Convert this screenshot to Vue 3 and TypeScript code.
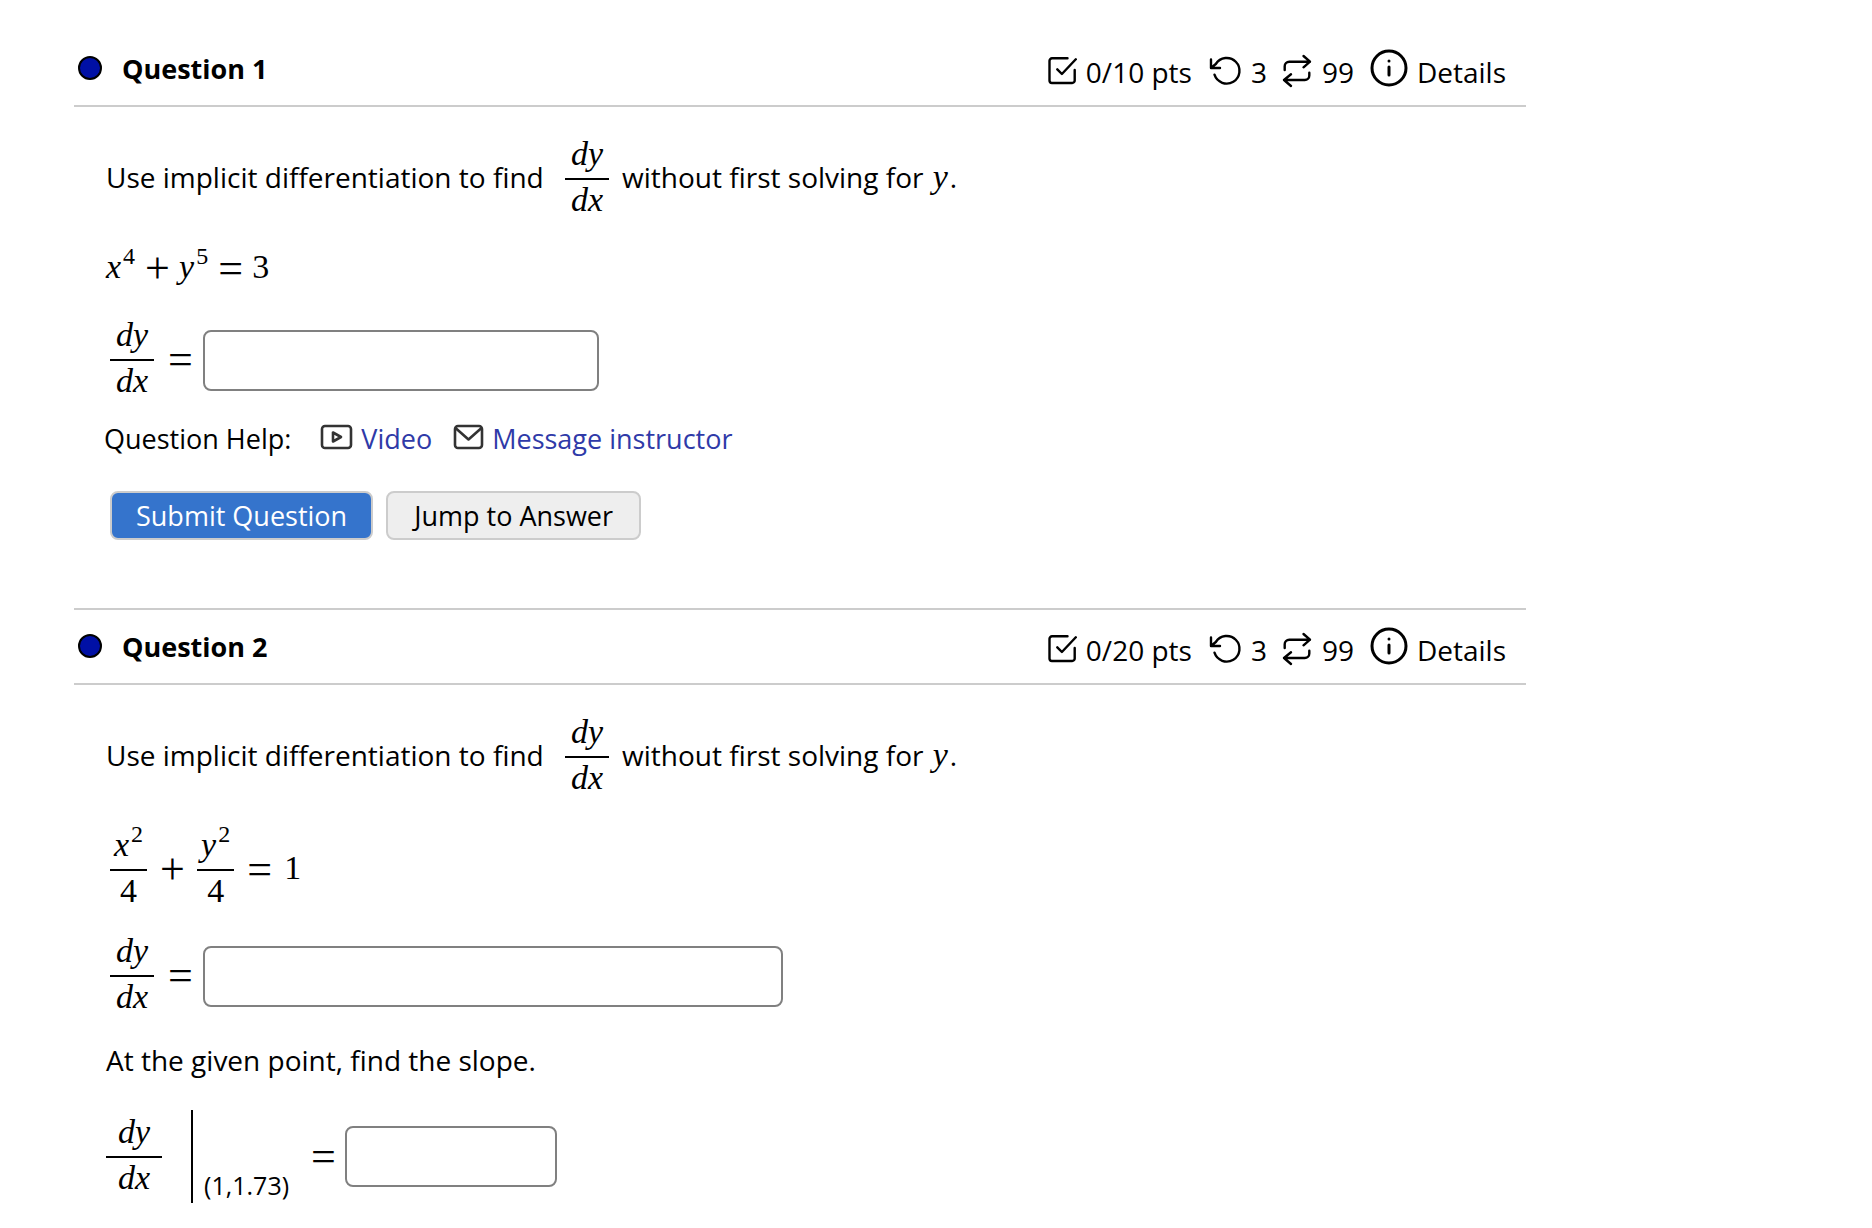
<script setup lang="ts">
import { defineComponent, h } from 'vue'

interface Question {
  id: number
  points: number
}

const questions: Question[] = [
  { id: 1, points: 10 },
  { id: 2, points: 20 },
]

const attempts = 3
const versions = 99

// Derivative written as a stacked fraction, dy over dx
const DyDx = defineComponent({
  setup: () => () =>
    h('span', { class: 'frac' }, [h('i', { class: 'num' }, 'dy'), h('i', { class: 'den' }, 'dx')]),
})
</script>

<template>
  <main class="assessment">
    <section v-for="q in questions" :key="q.id" class="question">
      <header class="head">
        <span class="status"></span>
        <h2>Question {{ q.id }}</h2>
        <div class="stats">
          <span class="stat score">
            <svg class="icon" width="30" height="34" viewBox="0 0 30 34">
              <path d="M20.5 4.3H5a2.5 2.5 0 0 0-2.5 2.5V26.5a2.5 2.5 0 0 0 2.5 2.5H25.2a2.5 2.5 0 0 0 2.5-2.5V16M10.3 15.3l4.6 4.7L28.8 5.3" />
            </svg>
            0/{{ q.points }} pts
          </span>
          <span class="stat">
            <svg class="icon" width="34" height="34" viewBox="0 0 34 34">
              <path d="M3 5.5V14H12M3 14L7.8 10A12.8 12.8 0 1 1 6.5 20.7" />
            </svg>
            {{ attempts }}
          </span>
          <span class="stat">
            <svg class="icon" width="32" height="34" viewBox="0 0 32 34">
              <path d="M3.7 16V12.2a4.5 4.5 0 0 1 4.5-4.5H29M22.5 2L29 7.7L22.5 13.3M28.3 18.7V21.5a4.5 4.5 0 0 1-4.5 4.5H3M10 20.3L3 26L10 32" />
            </svg>
            {{ versions }}
          </span>
          <a class="stat details" href="#details">
            <svg class="icon info" width="38" height="38" viewBox="0 0 38 38">
              <circle cx="19" cy="19" r="17" />
              <path d="M19 12V12.1M19 18V26" />
            </svg>
            Details
          </a>
        </div>
      </header>

      <div class="body">
        <p class="row prompt">
          <span class="lead">Use implicit differentiation to find</span>
          <DyDx />
          <span>without first solving for <i class="var">y</i>.</span>
        </p>

        <template v-if="q.id === 1">
          <div class="row math">
            <span class="term"><i>x</i><sup>4</sup></span>
            <span class="op">+</span>
            <span class="term"><i>y</i><sup>5</sup></span>
            <span class="op">=</span>
            <span class="term">3</span>
          </div>
          <div class="row answer">
            <label for="q1-dydx"><DyDx /><span class="op">=</span></label>
            <input id="q1-dydx" class="medium" type="text" />
          </div>
          <div class="help">
            <span>Question Help:</span>
            <a class="video" href="#video">
              <svg width="33" height="26" viewBox="0 0 33 26">
                <rect x="2" y="2" width="29" height="22" rx="3" />
                <path d="M13 8.5V17.5L21 13Z" />
              </svg>
              Video
            </a>
            <a href="#message">
              <svg width="31" height="26" viewBox="0 0 31 26">
                <rect x="2" y="2" width="27" height="22" rx="3" />
                <path d="M2.5 4L15.5 15.5L28.5 4" />
              </svg>
              Message instructor
            </a>
          </div>
          <div class="actions">
            <button class="primary" type="button">Submit Question</button>
            <button type="button">Jump to Answer</button>
          </div>
        </template>

        <template v-else>
          <div class="row math ellipse">
            <span class="frac tight">
              <span class="num"><i>x</i><sup>2</sup></span><span class="den">4</span>
            </span>
            <span class="op">+</span>
            <span class="frac tight">
              <span class="num"><i>y</i><sup>2</sup></span><span class="den">4</span>
            </span>
            <span class="op">=</span>
            <span class="term">1</span>
          </div>
          <div class="row answer">
            <label for="q2-dydx"><DyDx /><span class="op">=</span></label>
            <input id="q2-dydx" class="long" type="text" />
          </div>
          <p class="slope">At the given point, find the slope.</p>
          <div class="row evaluated">
            <label for="q2-slope">
              <DyDx class="wide" />
              <span class="at">(1,1.73)</span>
              <span class="op">=</span>
            </label>
            <input id="q2-slope" class="short" type="text" />
          </div>
        </template>
      </div>
    </section>
  </main>
</template>

<style>
body {
  margin: 0;
  background: #fff;
}
</style>

<style scoped>
.assessment {
  padding: 30px 346px 24px 74px;
  color: #000;
  font-family: "Open Sans", "Noto Sans", sans-serif;
  font-size: 28px;
  line-height: 36px;
}

.question {
  border-top: 2px solid #ccc;
}

.question:first-child {
  border-top-color: transparent;
}

.head {
  display: flex;
  align-items: center;
  height: 73px;
  padding: 0 20px 0 4px;
  border-bottom: 2px solid #ccc;
}

.status {
  box-sizing: border-box;
  width: 24px;
  height: 24px;
  margin-bottom: 2px;
  border: 2px solid #000;
  border-radius: 50%;
  background: #0010a5;
}

h2 {
  margin: 0 auto 0 20px;
  font-size: 27px;
  line-height: 36px;
  white-space: nowrap;
}

.stats {
  display: flex;
  align-items: center;
  gap: 14px;
  padding-top: 6px;
}

.stat {
  display: flex;
  align-items: center;
  gap: 9px;
  white-space: nowrap;
}

.score {
  margin-right: 2px;
}

.icon {
  flex: none;
  margin-bottom: 2px;
  fill: none;
  stroke: #000;
  stroke-width: 2.4;
  stroke-linecap: round;
  stroke-linejoin: round;
}

.info {
  margin-bottom: 8px;
  stroke-width: 3;
}

a {
  color: #2f3aa8;
  text-decoration: none;
}

.details {
  margin-left: 2px;
  color: #000;
}

.body {
  padding: 27px 0 68px 32px;
}

.question:last-child .body {
  padding-bottom: 0;
}

.row,
label {
  display: flex;
  align-items: center;
}

.row {
  height: 90px;
  white-space: nowrap;
}

p {
  margin: 0;
}

.prompt {
  gap: 13px;
}

.prompt > span:not(.frac),
.term {
  padding-bottom: 4px;
}

.lead {
  min-width: 446px;
}

.var {
  margin: 0 2px;
  font-family: "Liberation Serif", serif;
  font-size: 34px;
  line-height: 36px;
}

:deep(.frac) {
  display: inline-grid;
  grid-template-rows: 44px 44px;
  font-family: "Liberation Serif", serif;
  font-size: 34px;
  line-height: 36px;
  text-align: center;
}

:deep(.num) {
  box-sizing: border-box;
  height: 45px;
  padding: 1px 6px 0;
  border-bottom: 2px solid #000;
}

:deep(.den) {
  padding: 3px 6px 0;
}

.wide :deep(.num),
.wide :deep(.den) {
  padding-right: 12px;
  padding-left: 12px;
}

.tight .num,
.tight .den {
  padding-right: 4px;
  padding-left: 4px;
}

.math,
.term,
.op {
  font-family: "Liberation Serif", serif;
  font-size: 34px;
}

.op {
  width: 24px;
  font-size: 44px;
  text-align: center;
}

sup {
  position: relative;
  top: -14px;
  margin-left: 2px;
  font-size: 24px;
  line-height: 0;
  vertical-align: baseline;
}

.math {
  gap: 10px;
}

.ellipse {
  gap: 13px;
  margin: 23px 0 16px;
  padding-left: 4px;
}

.answer {
  gap: 11px;
  padding-left: 4px;
}

.math:not(.ellipse) + .answer {
  margin-top: 1px;
}

.answer label {
  gap: 14px;
}

input {
  box-sizing: border-box;
  height: 61px;
  padding: 0 12px;
  border: 2px solid #808080;
  border-radius: 8px;
  background: #fff;
  font: inherit;
}

.medium {
  width: 396px;
}

.long {
  width: 580px;
}

.short {
  width: 212px;
}

.help,
button {
  font-size: 27px;
}

.help {
  display: flex;
  margin: 16px 0 34px -2px;
}

.help a {
  display: flex;
  align-items: center;
  gap: 8px;
  margin-left: 21px;
}

.help .video {
  margin-left: 29px;
}

.help svg {
  margin-bottom: 4px;
  fill: none;
  stroke: #333;
  stroke-width: 2.6;
  stroke-linejoin: round;
}

.actions {
  display: flex;
  gap: 13px;
  padding-left: 4px;
}

button {
  height: 49px;
  padding: 0 24px;
  border: 2px solid #ccc;
  border-radius: 8px;
  background: #eee;
  color: #000;
  font-family: inherit;
}

button:last-child {
  padding: 0 26px;
}

.primary {
  background: #3574cc;
  color: #fff;
}

.slope {
  margin: 21px 0 32px;
}

.evaluated {
  gap: 10px;
  height: 93px;
}

.at {
  display: flex;
  align-items: flex-end;
  height: 93px;
  margin: 0 22px 0 29px;
  padding-left: 11px;
  box-sizing: border-box;
  border-left: 2px solid #000;
  font-size: 25px;
}
</style>
